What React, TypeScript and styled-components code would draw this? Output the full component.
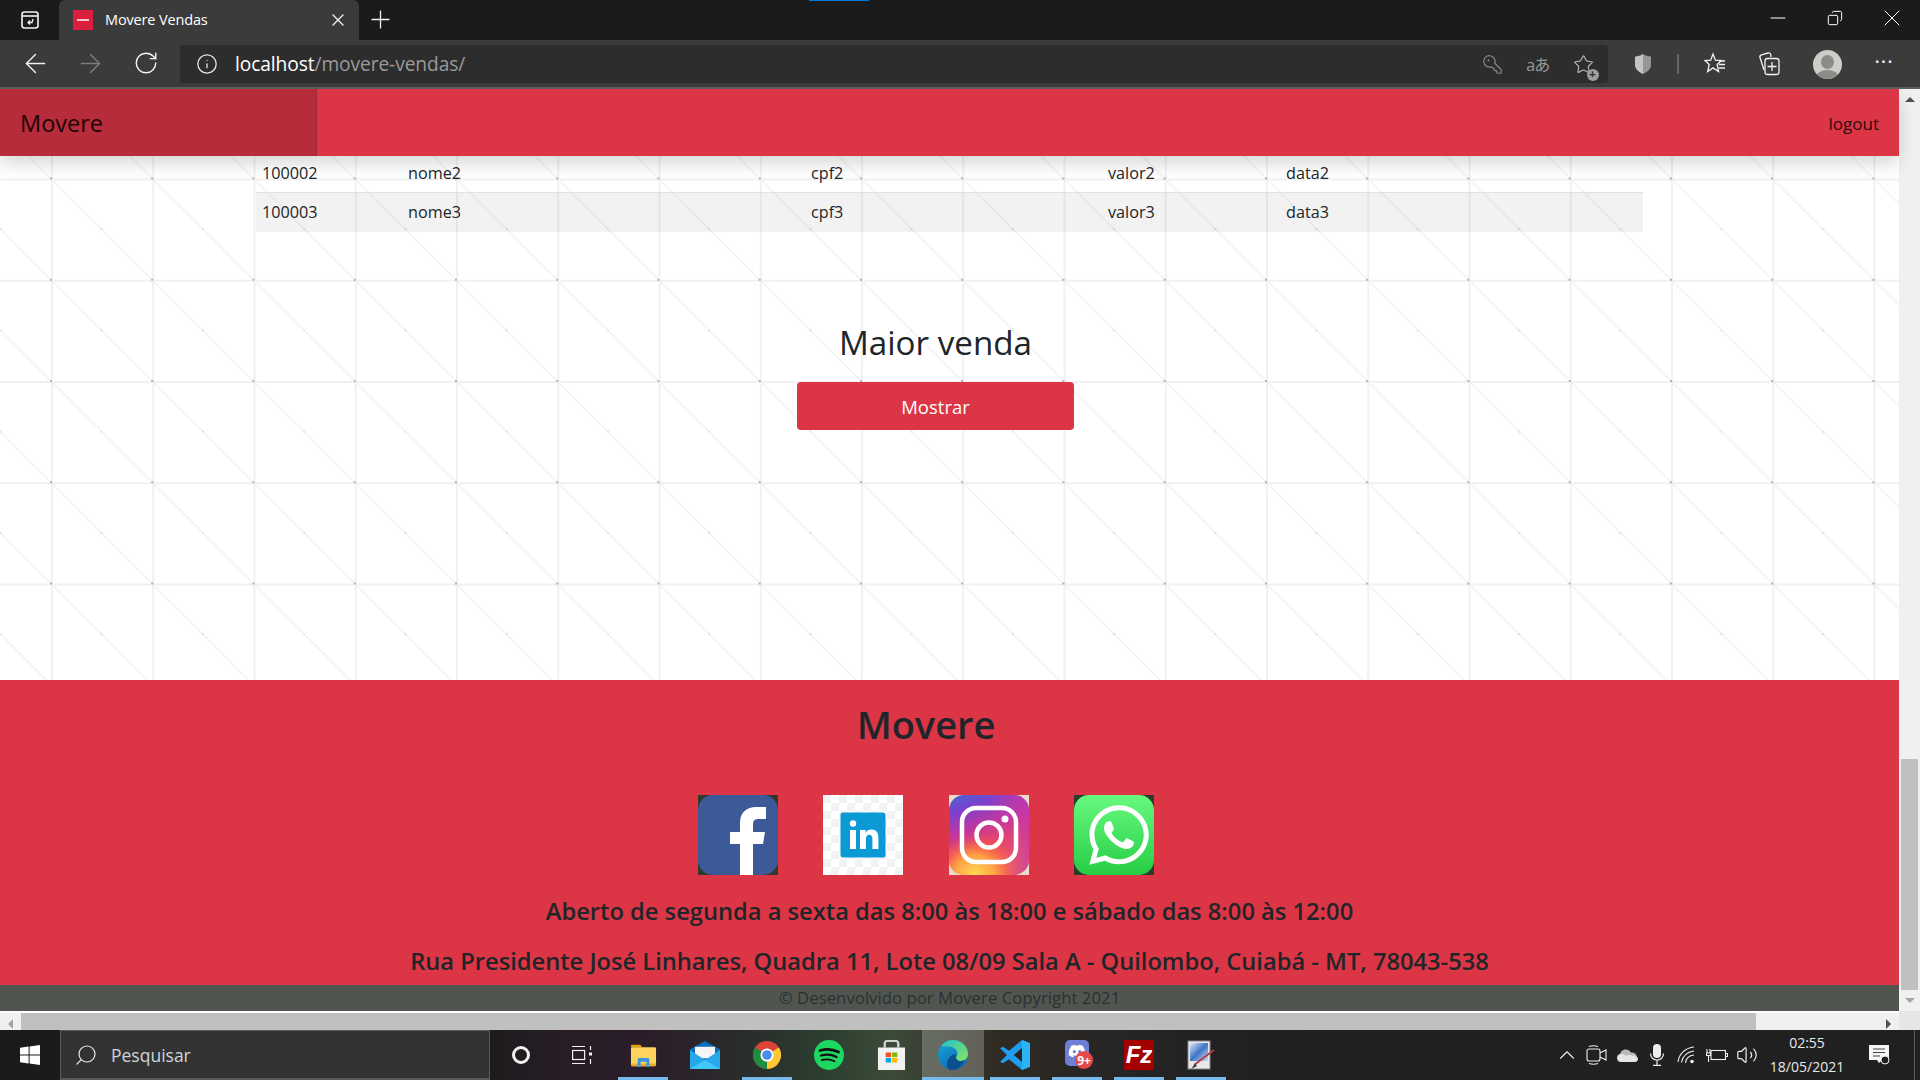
import React from 'react';
import styled, { createGlobalStyle } from 'styled-components';
import {
  ArrowLeft, ArrowRight, RotateCw, Info, X, Plus, Minus, Copy, KeyRound, Star, ChevronUp, Volume2, Search,
} from 'lucide-react';
import { FaWhatsapp, FaDiscord } from 'react-icons/fa';

const UI = '"Open Sans", "Noto Sans", "Liberation Sans", sans-serif';

const Global = createGlobalStyle`
  html, body { margin: 0; padding: 0; overflow: hidden; background: #fff; }
  body { font-family: ${UI}; }
  * { box-sizing: border-box; }
`;

const Screen = styled.div`
  width: 1920px; height: 1080px; display: flex; flex-direction: column; overflow: hidden;
`;

/* ---------- browser chrome ---------- */
const TabStrip = styled.div`
  position: relative; height: 40px; background: #1b1b1b; display: flex; align-items: stretch; flex: none; color: #fff;
`;
const LoadBar = styled.div`
  position: absolute; left: 809px; top: 0; width: 60px; height: 1px; background: #0078d7;
`;
const TabActions = styled.div`
  width: 59px; display: flex; align-items: center; justify-content: center;
`;
const Tab = styled.div`
  width: 300px; background: #3b3b3b; border-radius: 6px 6px 0 0; display: flex; align-items: center; padding: 0 11px 0 14px;
`;
const Favicon = styled.div`
  width: 20px; height: 20px; background: #dc1f3f; display: flex; align-items: center; justify-content: center; flex: none;
`;
const FaviconMark = styled.div`
  width: 12px; height: 2px; background: #f6c5ce;
`;
const TabTitle = styled.span`
  margin: 0 0 2px 12px; flex: 1; font-size: 14.5px; color: #fff; white-space: nowrap; letter-spacing: -0.15px;
`;
const NewTab = styled.div`
  width: 44px; display: flex; align-items: center; justify-content: center; padding: 0 2px 2px 0;
`;
const Spring = styled.div`
  flex: 1;
`;
const WinButton = styled.div`
  width: 57px; display: flex; align-items: center; justify-content: center; padding-bottom: 5px;
`;
const Toolbar = styled.div`
  height: 49px; flex: none; background: #3b3b3b; border-bottom: 2px solid #5f5f5f; padding: 5px 0 4px 8px;
  display: flex; align-items: stretch; color: #fff;
`;
const NavSlot = styled.div<{ $dim?: boolean }>`
  width: 55px; flex: none; display: flex; align-items: center; justify-content: center; padding-bottom: 2px;
  color: ${p => (p.$dim ? '#7d7d7d' : '#f2f2f2')};
`;
const AddressBar = styled.div`
  margin: 0 8px 0 7px; width: 1428px; flex: none; background: #2d2d2d; border-radius: 4px; display: flex; align-items: center; padding: 0 2px 0 12px;
`;
const AddrIcon = styled.div`
  width: 30px; display: flex; align-items: center; justify-content: center; color: #e6e6e6;
`;
const UrlText = styled.div`
  margin: 0 0 2px 13px; flex: 1; font-size: 19.2px; letter-spacing: -0.1px; color: #9a9a9a; white-space: nowrap;
`;
const UrlHost = styled.span`
  color: #fff;
`;
const AddrAction = styled.div`
  width: 45.5px; display: flex; align-items: center; justify-content: center; color: #8a8a8a; position: relative;
`;
const Translate = styled.span`
  font: 16px "Open Sans", "Noto Sans CJK JP", sans-serif; letter-spacing: -1px; color: #9a9a9a;
`;
const StarBadge = styled.span`
  position: absolute; left: 26px; top: 15px; width: 12px; height: 12px; border-radius: 50%; background: #9d9d9d; color: #2d2d2d;
  font: 700 11px/11px "Liberation Sans", sans-serif; text-align: center;
`;
const ToolSlot = styled.div<{ $w?: number }>`
  width: ${p => p.$w ?? 54.5}px; flex: none; display: flex; align-items: center; justify-content: center; color: #f2f2f2;
`;
const ToolSep = styled.div`
  width: 2px; height: 20px; background: #666; align-self: center; flex: none; margin: 0 9px 0 6px;
`;
const Avatar = styled.div`
  width: 29px; height: 29px; border-radius: 50%; background: #cfcdca; position: relative; overflow: hidden;
`;
const AvatarHead = styled.div`
  position: absolute; left: 8px; top: 5px; width: 13px; height: 14px; border-radius: 50%; background: #8d8b88;
`;
const AvatarBody = styled.div`
  position: absolute; left: 3px; top: 20px; width: 23px; height: 16px; border-radius: 50%; background: #8d8b88;
`;
const Dots = styled.div`
  font: 700 16px/16px "Liberation Sans", sans-serif; letter-spacing: 1px; color: #f2f2f2; margin-bottom: 5px;
`;

/* ---------- page ---------- */
const ViewportRow = styled.div`
  height: 922px; flex: none; display: flex;
`;
const PageColumn = styled.div`
  width: 1899px; display: flex; flex-direction: column; color: #212529;
`;
const Header = styled.header`
  height: 67px; flex: none; background: #dc3545; display: flex; align-items: stretch; position: relative; z-index: 2;
  box-shadow: 0 8px 16px rgba(0, 0, 0, 0.15);
`;
const Brand = styled.div`
  width: 317px; background: #b72c3b; border-right: 1px solid #a0283a; padding: 1px 0 0 20px; display: flex; align-items: center;
  font-size: 23.5px; color: #1d0507;
`;
const Logout = styled.div`
  margin-left: auto; padding: 1px 20px 0 0; display: flex; align-items: center; font-size: 17px; color: #2c0a0e;
`;
const Main = styled.main`
  flex: 1; overflow: hidden; padding: 0 256px; background-color: #fff;
  background-image:
    radial-gradient(circle, #dcdcdc 0.6px, transparent 1px),
    radial-gradient(circle, #b0b0b0 0.7px, transparent 1px),
    linear-gradient(to right, #f1f1f1 2px, transparent 2px),
    linear-gradient(to bottom, #f1f1f1 2px, transparent 2px),
    linear-gradient(45deg, transparent calc(50% - 1px), #eeeeee 50%, transparent calc(50% + 1px));
  background-size: 101.25px 101.25px;
  background-position: 51px 22.5px, 0.4px -28.1px, 51px 22.5px, 51px 22.5px, 51px 22.5px;
`;
const SalesTable = styled.table`
  width: 1387px; margin-top: -3px; border-collapse: collapse; table-layout: fixed; font-size: 16.2px; color: #212529;
`;
const Row = styled.tr<{ $shaded?: boolean }>`
  height: 39px; background: ${p => (p.$shaded ? 'rgba(0, 0, 0, 0.05)' : 'transparent')};
  border-top: 1px solid #dee2e6;
`;
const Cell = styled.td`
  padding: 0 6px;
`;
const Section = styled.section`
  margin: 87px 28px 0 0; display: flex; flex-direction: column; align-items: center;
`;
const SectionTitle = styled.h2`
  margin: 0; font-weight: 400; font-size: 33.2px; line-height: 48px; color: #212529;
`;
const PrimaryButton = styled.button`
  margin-top: 15px; width: 277px; height: 48px; background: #dc3545; border: 0; border-radius: 4px; color: #fff;
  font-family: ${UI}; font-size: 18.5px; padding: 2px 0 0;
`;
const Footer = styled.footer`
  height: 305px; flex: none; background: #dc3545; padding-top: 21px; display: flex; flex-direction: column; align-items: center;
`;
const FooterTitle = styled.h1`
  margin: 0 47px 0 0; font-size: 38px; line-height: 46px; font-weight: 600; color: #212529;
`;
const SocialRow = styled.div`
  margin: 48px 47px 0 0; display: flex; gap: 45.3px;
`;
const SocialTile = styled.svg`
  width: 80px; height: 80px; display: block;
`;
const FooterLine = styled.p<{ $gap: number }>`
  margin: ${p => p.$gap}px 0 0; font-size: 23.7px; line-height: 36px; font-weight: 600; color: #212529; white-space: nowrap;
`;
const CopyBar = styled.div`
  height: 26px; flex: none; background: #50564f; color: #2b3032; font-size: 16.8px; line-height: 26px; text-align: center; white-space: nowrap;
`;

/* ---------- scrollbars ---------- */
const VScroll = styled.div`
  width: 21px; background: #f0f0f0; display: flex; flex-direction: column; align-items: center;
`;
const ArrowBox = styled.div`
  width: 21px; height: 21px; flex: none; display: flex; align-items: center; justify-content: center;
`;
const Tri = styled.div<{ $dir: 'up' | 'down' | 'left' | 'right'; $c: string }>`
  width: 0; height: 0;
  ${p => p.$dir === 'up' && `border-left:5px solid transparent;border-right:5px solid transparent;border-bottom:5px solid ${p.$c};`}
  ${p => p.$dir === 'down' && `border-left:5px solid transparent;border-right:5px solid transparent;border-top:5px solid ${p.$c};`}
  ${p => p.$dir === 'left' && `border-top:5px solid transparent;border-bottom:5px solid transparent;border-right:5px solid ${p.$c};`}
  ${p => p.$dir === 'right' && `border-top:5px solid transparent;border-bottom:5px solid transparent;border-left:5px solid ${p.$c};`}
`;
const VThumb = styled.div`
  width: 17px; height: 231px; flex: none; background: #c0c0c0;
`;
const HScroll = styled.div`
  height: 19px; flex: none; background: #f0f0f0; border-top: 2px solid #fff; display: flex;
`;
const HThumb = styled.div`
  width: 1735px; background: #c0c0c0;
`;
const Corner = styled.div`
  width: 21px; background: #e6e6e6; margin-top: -2px;
`;

/* ---------- taskbar ---------- */
const Taskbar = styled.div`
  height: 50px; flex: none; display: flex; align-items: stretch; color: #fff;
  background: linear-gradient(to right, #1b1b1b 0, #1b1b1b 480px, #281d27 560px, #2b1e2a 650px, #2a2f2c 760px, #2c4030 830px, #3c4a38 890px, #2f2a22 1000px, #272525 1100px, #212121 1250px, #202020 100%);
`;
const StartButton = styled.div`
  width: 60px; display: flex; align-items: center; justify-content: center;
`;
const SearchBox = styled.div`
  width: 430px; background: #333; border: 1px solid #5a5a5a; border-bottom-width: 2px; display: flex; align-items: center; padding-left: 13px;
  color: #e8e8e8;
`;
const SearchLabel = styled.span`
  margin-left: 13px; font-size: 17.5px; color: #cfd6da;
`;
const TaskSlot = styled.div`
  width: 61px; display: flex; align-items: center; justify-content: center;
`;
const Ring = styled.div`
  width: 18px; height: 18px; border-radius: 50%; border: 3px solid #f2f2f2;
`;
const AppSlot = styled.div<{ $open?: boolean; $active?: boolean }>`
  position: relative; width: 62px; flex: none; display: flex; align-items: center; justify-content: center;
  background: ${p => (p.$active ? 'rgba(255,255,255,0.24)' : 'transparent')};
  &::after {
    content: ''; display: ${p => (p.$open ? 'block' : 'none')}; position: absolute; bottom: 0;
    left: ${p => (p.$active ? '0' : '6px')}; right: ${p => (p.$active ? '0' : '6px')}; height: 3px; background: #76b9ed;
  }
`;
const Tray = styled.div`
  margin-left: auto; display: flex; align-items: stretch; padding-right: 14px; position: relative;
`;
const TraySlot = styled.div`
  width: 30px; display: flex; align-items: center; justify-content: center; color: #eee;
`;
const Clock = styled.div`
  width: 90px; display: flex; flex-direction: column; align-items: center; justify-content: center; font-size: 14px; line-height: 24px; color: #e8e8e8; white-space: nowrap;
`;
const NotifySlot = styled.div`
  width: 54px; display: flex; align-items: center; justify-content: center;
`;
const ShowDesktop = styled.div`
  position: absolute; right: 5px; top: 0; bottom: 0; width: 1px; background: #5c5c5c;
`;

const SidebarIcon = () => (
  <svg width="18" height="18" viewBox="0 0 18 18" fill="none" stroke="#f4f4f4" strokeWidth="1.6">
    <rect x="1" y="1" width="16" height="16" rx="2.5" />
    <path d="M1 5h16" />
    <path d="M12 8l-1 3.5H7M9 9.5l-2 2 2 2" strokeWidth="1.3" />
  </svg>
);
const ShieldIcon = () => (
  <svg width="16" height="20" viewBox="0 0 16 20">
    <path d="M8 0C6 1.500 3 2.300 0 2.500V11c0 4 3.500 7 8 9z" fill="#c4c4c4" />
    <path d="M8 0c2 1.500 5 2.300 8 2.500V11c0 4-3.500 7-8 9z" fill="#969696" />
  </svg>
);
const FavsIcon = () => (
  <svg width="22" height="24" viewBox="0 0 22 24" fill="none" stroke="#f2f2f2" strokeWidth="1.3">
    <path d="M9 2l2.400 6.200 6 .3-4.200 4 1.400 7-5.600-3.600-5.300 3.600 1.500-7L1 8.500l5.700-.3z" />
    <path d="M15 9h6M15 12.500h6M15 16h6" />
  </svg>
);
const CollectIcon = () => (
  <svg width="24" height="26" viewBox="0 0 24 26" fill="none" stroke="#f2f2f2" strokeWidth="1.3">
    <path d="M7 19L3 6.500c-.4-1.300.3-2.300 1.500-2.700L11 2c1.500-.3 2.400.4 2.800 1.600L14 6" />
    <rect x="8" y="7.500" width="14" height="16" rx="2.500" />
    <path d="M15 11v9M10.500 15.500h9" />
  </svg>
);
const FacebookTile = () => (
  <SocialTile viewBox="0 0 80 80">
    <rect width="80" height="80" fill="#2f3b2c" />
    <rect width="80" height="80" rx="15" fill="#3d5a98" />
    <path d="M42 80V49H32V37H42V28C42 17 49 12 58 12H68V24H61C56 24 55 26 55 30V37H67L65 49H55V80Z" fill="#fff" />
  </SocialTile>
);
const LinkedinTile = () => (
  <SocialTile viewBox="0 0 80 80">
    <defs>
      <pattern id="chk" width="16" height="16" patternUnits="userSpaceOnUse">
        <rect width="16" height="16" fill="#fff" />
        <rect width="8" height="8" fill="#f2f2f2" />
        <rect x="8" y="8" width="8" height="8" fill="#f2f2f2" />
      </pattern>
    </defs>
    <rect width="80" height="80" fill="url(#chk)" />
    <rect x="17.500" y="17.500" width="45" height="45" rx="2.500" fill="#0b9ad6" />
    <circle cx="30" cy="28.500" r="3.200" fill="#fff" />
    <rect x="27" y="35" width="6" height="19" fill="#fff" />
    <path d="M37 35h5.600v2.800c1.200-2 3.300-3.200 5.800-3.200 5 0 7 3 7 8V54h-6V44c0-2.600-.9-4.200-3-4.200-2.300 0-3.500 1.700-3.500 4.200V54H37Z" fill="#fff" />
  </SocialTile>
);
const InstagramTile = () => (
  <SocialTile viewBox="0 0 80 80">
    <defs>
      <linearGradient id="igv" x1="0.1" y1="0" x2="0.45" y2="1">
        <stop offset="0" stopColor="#4a62d2" />
        <stop offset="0.18" stopColor="#7c40cc" />
        <stop offset="0.45" stopColor="#c4369c" />
        <stop offset="0.7" stopColor="#f44e4e" />
        <stop offset="1" stopColor="#ff7a3c" />
      </linearGradient>
      <linearGradient id="igh" x1="0" y1="0" x2="1" y2="0">
        <stop offset="0.5" stopColor="#c837ab" stopOpacity="0" />
        <stop offset="1" stopColor="#c837ab" stopOpacity="0.8" />
      </linearGradient>
      <radialGradient id="igr" cx="0.32" cy="1" r="0.5">
        <stop offset="0" stopColor="#ffdd55" />
        <stop offset="0.5" stopColor="#ffb347" stopOpacity="0.8" />
        <stop offset="1" stopColor="#ff5a3c" stopOpacity="0" />
      </radialGradient>
    </defs>
    <rect width="80" height="80" fill="#e9dccb" />
    <rect width="80" height="80" rx="15" fill="url(#igv)" />
    <rect width="80" height="80" rx="15" fill="url(#igh)" />
    <rect width="80" height="80" rx="15" fill="url(#igr)" />
    <rect x="13" y="13" width="54" height="54" rx="14" fill="none" stroke="#fff" strokeWidth="4.500" />
    <circle cx="40" cy="40" r="12.500" fill="none" stroke="#fff" strokeWidth="4.500" />
    <circle cx="56" cy="24" r="3.500" fill="#fff" />
  </SocialTile>
);
const WhatsappTile = () => (
  <SocialTile viewBox="0 0 80 80">
    <defs>
      <linearGradient id="wa" x1="0" y1="0" x2="0" y2="1">
        <stop offset="0" stopColor="#67f97f" />
        <stop offset="1" stopColor="#27cd44" />
      </linearGradient>
    </defs>
    <rect width="80" height="80" fill="#2f3b2c" />
    <rect width="80" height="80" rx="15" fill="url(#wa)" />
    <FaWhatsapp x={11} y={6} size={68} color="#fff" />
  </SocialTile>
);
const WindowsLogo = () => (
  <svg width="20" height="20" viewBox="0 0 20 20" fill="#fff">
    <path d="M0 2.800l8.600-1.200v7.900H0zM9.600 1.400L20 0v9.500H9.600zM0 10.500h8.600v7.900L0 17.200zM9.600 10.500H20V20L9.600 18.600z" />
  </svg>
);
const TaskViewIcon = () => (
  <svg width="20" height="20" viewBox="0 0 20 20" fill="none" stroke="#f2f2f2" strokeWidth="1.200">
    <path d="M0 1.500h13M0 18.500h13" />
    <rect x="0.600" y="5.500" width="12" height="9" />
    <path d="M18.500 1v4M18.500 14v5" />
    <rect x="17" y="7.500" width="3" height="3" fill="#f2f2f2" stroke="none" />
  </svg>
);
const ExplorerIcon = () => (
  <svg width="27" height="24" viewBox="0 0 28 28" preserveAspectRatio="none">
    <path d="M1 3.500C1 2.500 1.700 2 2.500 2h8l2.500 3H1z" fill="#e3a008" />
    <rect x="1" y="5" width="26" height="22" rx="1.500" fill="#ffd45e" />
    <rect x="1" y="24" width="26" height="3" fill="#e8ab2c" />
    <path d="M8 28v-9c0-1 .7-1.500 1.500-1.500h9c.8 0 1.500.5 1.500 1.500v9h-3v-6h-6v6z" fill="#3a96dd" />
  </svg>
);
const MailIcon = () => (
  <svg width="30" height="28" viewBox="0 0 30 34" preserveAspectRatio="none">
    <path d="M0 10L15 0l15 10v24H0z" fill="#0f6cbd" />
    <path d="M5 7h20v14H5z" fill="#f4f4f4" />
    <path d="M0 11l15 12 15-12v23H0z" fill="#28a8ea" />
    <path d="M0 34l15-11 15 11z" fill="#50d9ff" opacity="0.65" />
  </svg>
);
const ChromeIcon = () => (
  <svg width="28" height="28" viewBox="0 0 32 32">
    <circle cx="16" cy="16" r="16" fill="#db4437" />
    <path d="M16 16L2.500 7.500A16 16 0 0 0 16 32z" fill="#1e8e3e" />
    <path d="M16 16L16 32A16 16 0 0 0 29.500 7.500z" fill="#fcc934" />
    <circle cx="16" cy="16" r="7.500" fill="#fff" />
    <circle cx="16" cy="16" r="5.500" fill="#4a8cf0" />
  </svg>
);
const SpotifyIcon = () => (
  <svg width="30" height="30" viewBox="0 0 30 30" fill="none" stroke="#111" strokeLinecap="round">
    <circle cx="15" cy="15" r="15" fill="#1ed760" stroke="none" />
    <path d="M6 10.500c6-1.800 13-1.400 18.500 1.500" strokeWidth="2.800" />
    <path d="M7 15.500c5-1.300 11-.9 15.500 1.500" strokeWidth="2.300" />
    <path d="M8 20c4-1 9-.7 12.500 1.300" strokeWidth="1.900" />
  </svg>
);
const StoreIcon = () => (
  <svg width="29" height="30" viewBox="0 0 30 36" preserveAspectRatio="none">
    <path d="M8 9V4c0-2 1-3 3-3h8c2 0 3 1 3 3v5" fill="none" stroke="#cfcfcf" strokeWidth="2.500" />
    <path d="M1 9h28l0 27H1z" fill="#f2f2f2" />
    <rect x="9" y="15" width="5.500" height="5.500" fill="#f25022" />
    <rect x="15.500" y="15" width="5.500" height="5.500" fill="#7fba00" />
    <rect x="9" y="21.500" width="5.500" height="5.500" fill="#00a4ef" />
    <rect x="15.500" y="21.500" width="5.500" height="5.500" fill="#ffb900" />
  </svg>
);
const EdgeIcon = () => (
  <svg width="30" height="30" viewBox="0 0 30 30">
    <defs>
      <linearGradient id="edgeA" x1="0" y1="0" x2="0.6" y2="1">
        <stop offset="0" stopColor="#1aa6d8" />
        <stop offset="1" stopColor="#0c6bb4" />
      </linearGradient>
      <linearGradient id="edgeB" x1="0.2" y1="0" x2="1" y2="0.8">
        <stop offset="0" stopColor="#2bc5c0" />
        <stop offset="1" stopColor="#7fe26a" />
      </linearGradient>
    </defs>
    <circle cx="15" cy="15" r="15" fill="url(#edgeA)" />
    <path d="M3 6C6 2 10 0 15 0c8 0 15 6 15 14 0 4-3 7-7 7-3 0-5-1.500-5-3 0-1.500 1.500-2 1.500-4.500C19.500 9.500 15 6.500 11 6.500 8 6.500 5 6.500 3 6z" fill="url(#edgeB)" />
    <path d="M11 29.500C8 27 8.500 20 12 16.500c1.500-1.500 4-2.500 6-2.500-.5 2-.5 3 0 4.500 1 2.500 3.500 3 5.500 2.500l2.500-.8C24 26 19 30 15 30c-1.500 0-2.800-.2-4-.5z" fill="#0a4f8f" />
  </svg>
);
const VsCodeIcon = () => (
  <svg width="30" height="30" viewBox="0 0 30 36" preserveAspectRatio="none">
    <path d="M22 0l8 4v28l-8 4-13-13-6 5-3-2 7-8-7-8 3-2 6 5z M22 10l-8 8 8 8z" fill="#1f9cf0" fillRule="evenodd" />
    <path d="M22 0l8 4v28l-8 4z" fill="#2bb3f5" />
    <path d="M22 10l-8 8 8 8z" fill="#2a2523" />
  </svg>
);
const DiscordIcon = () => (
  <svg width="38" height="32" viewBox="0 0 38 32">
    <rect x="7" y="1" width="24" height="26" rx="5" fill="#6f7fd6" />
    <FaDiscord x={10} y={3} size={18} color="#fff" />
    <circle cx="26" cy="21" r="9" fill="#e5484d" />
    <text x="26" y="25.500" textAnchor="middle" fontSize="12" fontWeight="700" fill="#fff" fontFamily={UI}>9+</text>
  </svg>
);
const ZillaIcon = () => (
  <svg width="30" height="30" viewBox="0 0 30 30">
    <rect width="30" height="30" fill="#a30000" />
    <text x="15" y="23" textAnchor="middle" fontSize="24" fontWeight="700" fontStyle="italic" fill="#fff" fontFamily='"Liberation Sans", sans-serif'>Fz</text>
  </svg>
);
const PaintIcon = () => (
  <svg width="28" height="30" viewBox="0 0 28 30">
    <defs>
      <linearGradient id="pic" x1="0" y1="0" x2="1" y2="1">
        <stop offset="0" stopColor="#dbe8fa" />
        <stop offset="0.5" stopColor="#3f74c6" />
        <stop offset="1" stopColor="#cfe0f5" />
      </linearGradient>
    </defs>
    <rect x="1" y="1" width="22" height="28" fill="#e8e8e8" stroke="#888" />
    <rect x="3" y="3" width="18" height="18" fill="url(#pic)" />
    <path d="M7 25L27 10" stroke="#b53a4a" strokeWidth="1.800" />
    <path d="M4 29l4-5 2 2z" fill="#333" />
  </svg>
);
const TrayVideo = () => (
  <svg width="22" height="20" viewBox="0 0 22 20" fill="none" stroke="#eee" strokeWidth="1.100">
    <rect x="1" y="4" width="13" height="12" rx="2" />
    <path d="M14 8l6-3v10l-6-3" />
    <path d="M3 1.500c3-1 6-1 9 0M3 18.500c3 1 6 1 9 0" />
  </svg>
);
const TrayCloud = () => (
  <svg width="22" height="14" viewBox="0 0 22 14">
    <path d="M5 14a4 4 0 0 1-1-7.900A6 6 0 0 1 15 4.500 4.800 4.800 0 0 1 17 14z" fill="#b9b9b9" />
    <path d="M5 14a4 4 0 0 1 .5-7.900c2 0 3 .6 4.500 2 1.500-1 4-1.500 6-.6 3.500-.2 6 1.600 6 3.500 0 1.800-1.500 3-3 3z" fill="#e6e6e6" />
  </svg>
);
const TrayMic = () => (
  <svg width="16" height="22" viewBox="0 0 16 22" fill="none" stroke="#eee" strokeWidth="1.200">
    <rect x="4" y="0" width="8" height="14" rx="4" fill="#eee" stroke="none" />
    <path d="M1.500 9.500c0 4 3 6.500 6.500 6.500s6.500-2.500 6.500-6.500M8 16v5M4 21.400h8" />
  </svg>
);
const TrayWifi = () => (
  <svg width="20" height="18" viewBox="0 0 20 18" fill="none" stroke="#eee" strokeWidth="1.100">
    <path d="M1 16C2 8 8 2 17 1M4.500 16.500C5.500 10.500 10 6 17 5M8.500 17C9 13 12 9.500 17 9" />
    <circle cx="15" cy="15.500" r="1.800" fill="#eee" stroke="none" />
  </svg>
);
const TrayBattery = () => (
  <svg width="22" height="16" viewBox="0 0 22 16" fill="none" stroke="#eee" strokeWidth="1.100">
    <rect x="5" y="3.500" width="14.500" height="9" />
    <path d="M19.500 6.500h2v3h-2" />
    <path d="M1 2v4M4 2v4M0.500 6h4v2.500H.5zM2.500 8.500V15" />
  </svg>
);
const NotifyIcon = () => (
  <svg width="22" height="20" viewBox="0 0 22 20">
    <path d="M1 0h20v15h-7l-3 3-2-3H1z" fill="#f5f5f5" />
    <path d="M5 4h12M5 7.500h12M5 11h7" stroke="#444" strokeWidth="1" />
    <circle cx="17" cy="15" r="4" fill="#202020" stroke="#f5f5f5" strokeWidth="1" />
  </svg>
);

const rows = [
  { id: '100002', nome: 'nome2', cpf: 'cpf2', valor: 'valor2', data: 'data2' },
  { id: '100003', nome: 'nome3', cpf: 'cpf3', valor: 'valor3', data: 'data3' },
];

export default function App() {
  return (
    <Screen>
      <Global />
      <TabStrip>
        <LoadBar />
        <TabActions><SidebarIcon /></TabActions>
        <Tab>
          <Favicon><FaviconMark /></Favicon>
          <TabTitle>Movere Vendas</TabTitle>
          <X size={20} strokeWidth={1.3} absoluteStrokeWidth color="#f2f2f2" />
        </Tab>
        <NewTab><Plus size={29} strokeWidth={1.3} absoluteStrokeWidth color="#f2f2f2" /></NewTab>
        <Spring />
        <WinButton><Minus size={24} strokeWidth={1} absoluteStrokeWidth /></WinButton>
        <WinButton><Copy size={16} strokeWidth={1} absoluteStrokeWidth transform="scale(-1,1)" /></WinButton>
        <WinButton><X size={28} strokeWidth={1} absoluteStrokeWidth /></WinButton>
      </TabStrip>
      <Toolbar>
        <NavSlot><ArrowLeft size={31} strokeWidth={1.4} absoluteStrokeWidth /></NavSlot>
        <NavSlot $dim><ArrowRight size={31} strokeWidth={1.4} absoluteStrokeWidth /></NavSlot>
        <NavSlot><RotateCw size={26} strokeWidth={1.4} absoluteStrokeWidth /></NavSlot>
        <AddressBar>
          <AddrIcon><Info size={22} strokeWidth={1.3} absoluteStrokeWidth /></AddrIcon>
          <UrlText><UrlHost>localhost</UrlHost>/movere-vendas/</UrlText>
          <AddrAction><KeyRound size={21} strokeWidth={1.2} absoluteStrokeWidth transform="scale(-1,1)" /></AddrAction>
          <AddrAction><Translate>aあ</Translate></AddrAction>
          <AddrAction>
            <Star size={21} strokeWidth={1.2} absoluteStrokeWidth color="#b0b0b0" />
            <StarBadge>+</StarBadge>
          </AddrAction>
        </AddressBar>
        <ToolSlot><ShieldIcon /></ToolSlot>
        <ToolSep />
        <ToolSlot><FavsIcon /></ToolSlot>
        <ToolSlot><CollectIcon /></ToolSlot>
        <ToolSlot $w={62}><Avatar><AvatarHead /><AvatarBody /></Avatar></ToolSlot>
        <ToolSlot $w={52}><Dots>···</Dots></ToolSlot>
      </Toolbar>

      <ViewportRow>
        <PageColumn>
          <Header>
            <Brand>Movere</Brand>
            <Logout>logout</Logout>
          </Header>
          <Main>
            <SalesTable>
              <colgroup>
                <col width="146" />
                <col width="403" />
                <col width="297" />
                <col width="178" />
                <col width="363" />
              </colgroup>
              <tbody>
                {rows.map((r, i) => (
                  <Row key={r.id} $shaded={i === 1}>
                    <Cell>{r.id}</Cell>
                    <Cell>{r.nome}</Cell>
                    <Cell>{r.cpf}</Cell>
                    <Cell>{r.valor}</Cell>
                    <Cell>{r.data}</Cell>
                  </Row>
                ))}
              </tbody>
            </SalesTable>
            <Section>
              <SectionTitle>Maior venda</SectionTitle>
              <PrimaryButton>Mostrar</PrimaryButton>
            </Section>
          </Main>
          <Footer>
            <FooterTitle>Movere</FooterTitle>
            <SocialRow>
              <FacebookTile />
              <LinkedinTile />
              <InstagramTile />
              <WhatsappTile />
            </SocialRow>
            <FooterLine $gap={18}>Aberto de segunda a sexta das 8:00 às 18:00 e sábado das 8:00 às 12:00</FooterLine>
            <FooterLine $gap={14}>Rua Presidente José Linhares, Quadra 11, Lote 08/09 Sala A - Quilombo, Cuiabá - MT, 78043-538</FooterLine>
          </Footer>
          <CopyBar>© Desenvolvido por Movere Copyright 2021</CopyBar>
        </PageColumn>
        <VScroll>
          <ArrowBox><Tri $dir="up" $c="#505050" /></ArrowBox>
          <Spring />
          <VThumb />
          <ArrowBox><Tri $dir="down" $c="#a3a3a3" /></ArrowBox>
        </VScroll>
      </ViewportRow>
      <HScroll>
        <ArrowBox><Tri $dir="left" $c="#a3a3a3" /></ArrowBox>
        <HThumb />
        <Spring />
        <ArrowBox><Tri $dir="right" $c="#505050" /></ArrowBox>
        <Corner />
      </HScroll>

      <Taskbar>
        <StartButton><WindowsLogo /></StartButton>
        <SearchBox>
          <Search size={24} strokeWidth={1.2} absoluteStrokeWidth transform="scale(-1,1)" />
          <SearchLabel>Pesquisar</SearchLabel>
        </SearchBox>
        <TaskSlot><Ring /></TaskSlot>
        <TaskSlot><TaskViewIcon /></TaskSlot>
        <AppSlot $open><ExplorerIcon /></AppSlot>
        <AppSlot><MailIcon /></AppSlot>
        <AppSlot $open><ChromeIcon /></AppSlot>
        <AppSlot><SpotifyIcon /></AppSlot>
        <AppSlot><StoreIcon /></AppSlot>
        <AppSlot $open $active><EdgeIcon /></AppSlot>
        <AppSlot $open><VsCodeIcon /></AppSlot>
        <AppSlot $open><DiscordIcon /></AppSlot>
        <AppSlot $open><ZillaIcon /></AppSlot>
        <AppSlot $open><PaintIcon /></AppSlot>
        <Tray>
          <TraySlot><ChevronUp size={26} strokeWidth={1.1} absoluteStrokeWidth /></TraySlot>
          <TraySlot><TrayVideo /></TraySlot>
          <TraySlot><TrayCloud /></TraySlot>
          <TraySlot><TrayMic /></TraySlot>
          <TraySlot><TrayWifi /></TraySlot>
          <TraySlot><TrayBattery /></TraySlot>
          <TraySlot><Volume2 size={22} strokeWidth={1.2} absoluteStrokeWidth /></TraySlot>
          <Clock><span>02:55</span><span>18/05/2021</span></Clock>
          <NotifySlot><NotifyIcon /></NotifySlot>
          <ShowDesktop />
        </Tray>
      </Taskbar>
    </Screen>
  );
}
